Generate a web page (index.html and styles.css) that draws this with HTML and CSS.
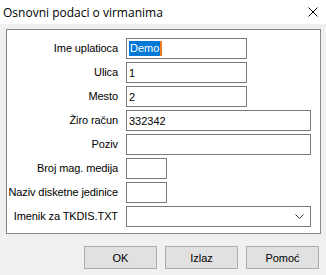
FILE: index.html
```html
<!DOCTYPE html>
<html lang="sr">
<head>
    <meta charset="UTF-8">
    <title>Osnovni podaci o virmanima</title>
    <link rel="stylesheet" href="styles.css">
</head>
<body>
    <div class="dialog">
        <div class="titlebar">
            <span class="title">Osnovni podaci o virmanima</span>
            <svg class="close" width="10" height="10" viewBox="0 0 10 10">
                <path d="M0.5 0.5L9.5 9.5M9.5 0.5L0.5 9.5" stroke="#000" stroke-width="1" fill="none"/>
            </svg>
        </div>
        <div class="panel">
            <div class="form">
                <label>Ime uplatioca</label>
                <div class="field w-md"><span class="sel">Demo</span><span class="caret"></span></div>
                <label>Ulica</label>
                <div class="field w-md">1</div>
                <label>Mesto</label>
                <div class="field w-md">2</div>
                <label>Žiro račun</label>
                <div class="field w-lg">332342</div>
                <label>Poziv</label>
                <div class="field w-lg"></div>
                <label>Broj mag. medija</label>
                <div class="field w-sm"></div>
                <label>Naziv disketne jedinice</label>
                <div class="field w-sm"></div>
                <label>Imenik za TKDIS.TXT</label>
                <div class="field w-lg combo">
                    <svg class="chevron" width="9" height="5" viewBox="0 0 9 5">
                        <path d="M0.5 0.5L4.5 4.5L8.5 0.5" stroke="#333" stroke-width="1" fill="none"/>
                    </svg>
                </div>
            </div>
        </div>
        <div class="buttons">
            <button>OK</button>
            <button>Izlaz</button>
            <button>Pomoć</button>
        </div>
    </div>
</body>
</html>
```
FILE: styles.css
```css
* {
    margin: 0;
    padding: 0;
    box-sizing: border-box;
}
body {
    width: 326px;
    height: 275px;
    background-color: #f0f0f0;
    font-family: "Liberation Sans", Arial, sans-serif;
    font-size: 11px;
    color: #000;
    overflow: hidden;
}
.titlebar {
    height: 24px;
    background-color: #fff;
    display: flex;
    align-items: center;
    justify-content: space-between;
    padding: 0 8px 0 3px;
}
.title {
    font-family: "Open Sans", "Noto Sans", sans-serif;
    font-size: 12px;
    color: #000;
}
.close {
    display: block;
}
.panel {
    margin: 5px 5px 0 6px;
    height: 205px;
    background-color: #fff;
    border: 1px solid #828790;
    padding: 8px 0 0 0;
}
.form {
    display: grid;
    grid-template-columns: 111px auto;
    column-gap: 8px;
    row-gap: 3px;
    align-items: center;
}
label {
    display: flex;
    justify-content: flex-end;
    white-space: nowrap;
    line-height: 21px;
    letter-spacing: -0.1px;
}
.field {
    height: 21px;
    border: 1px solid #7a7a7a;
    background-color: #fff;
    display: flex;
    align-items: center;
    padding-left: 2px;
}
.w-sm {
    width: 41px;
}
.w-md {
    width: 121px;
}
.w-lg {
    width: 185px;
}
.sel {
    background-color: #0078d7;
    color: #fff;
    line-height: 15px;
    padding: 0 1px;
}
.caret {
    width: 2px;
    height: 15px;
    background-color: #f07820;
}
.combo {
    justify-content: flex-end;
    padding-right: 6px;
}
.chevron {
    display: block;
}
.buttons {
    display: flex;
    justify-content: flex-end;
    gap: 8px;
    padding: 12px 7px 0 0;
}
button {
    width: 73px;
    height: 23px;
    background-color: #e1e1e1;
    border: 1px solid #adadad;
    font-family: "Liberation Sans", Arial, sans-serif;
    font-size: 11px;
    color: #000;
}
```
